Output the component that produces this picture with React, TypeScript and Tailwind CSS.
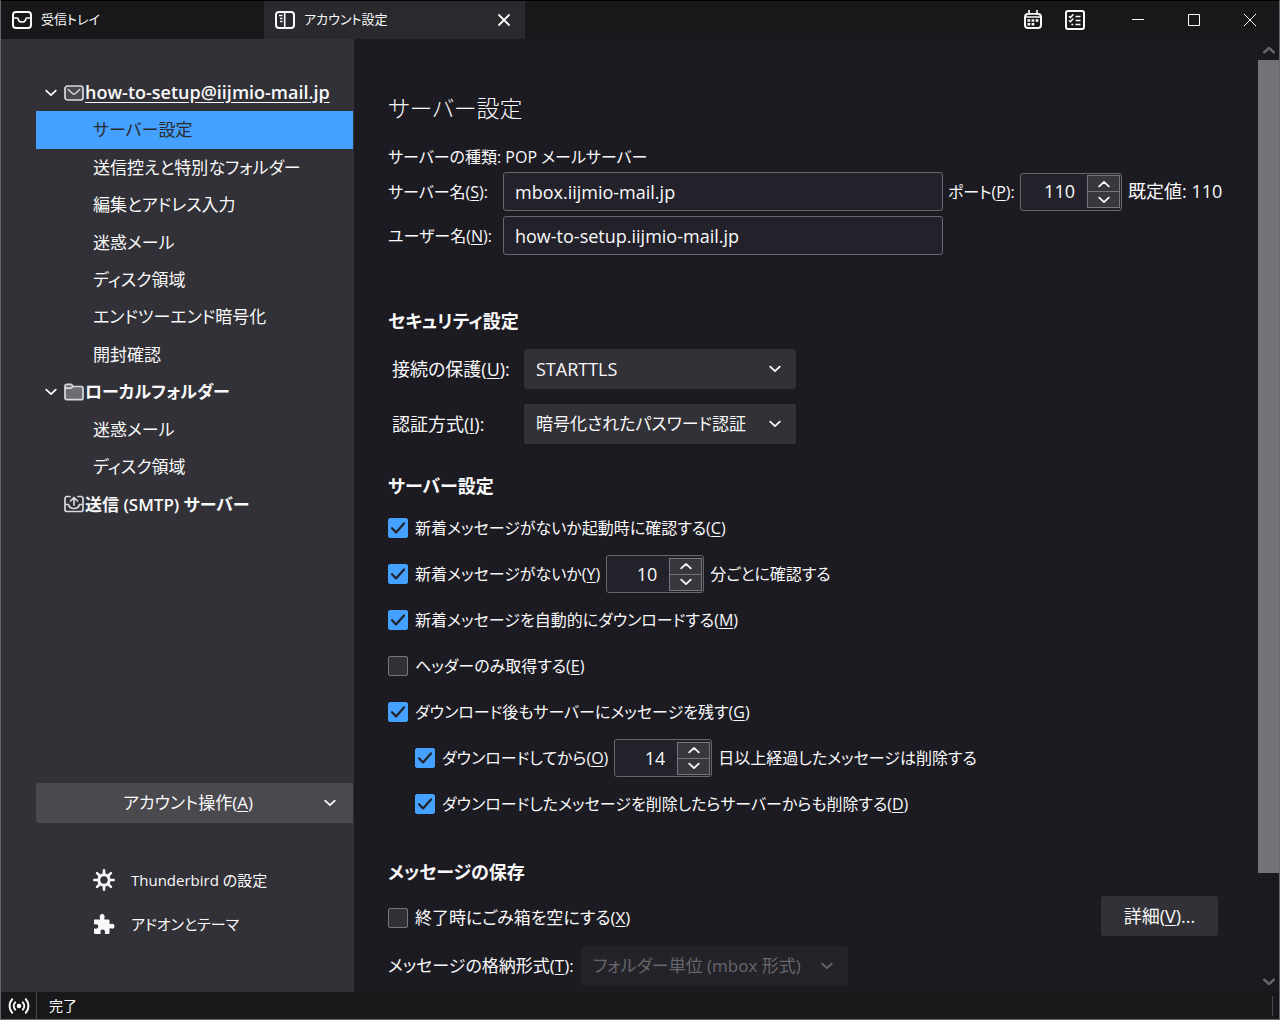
import { useState } from 'react'
import type { ReactNode } from 'react'

interface NavItem {
  label: string
  level: 'root' | 'child'
  icon?: 'mail' | 'folder' | 'smtp'
  expandable?: boolean
  address?: boolean
}

const navItems: NavItem[] = [
  { label: 'how-to-setup@iijmio-mail.jp', level: 'root', icon: 'mail', expandable: true, address: true },
  { label: 'サーバー設定', level: 'child' },
  { label: '送信控えと特別なフォルダー', level: 'child' },
  { label: '編集とアドレス入力', level: 'child' },
  { label: '迷惑メール', level: 'child' },
  { label: 'ディスク領域', level: 'child' },
  { label: 'エンドツーエンド暗号化', level: 'child' },
  { label: '開封確認', level: 'child' },
  { label: 'ローカルフォルダー', level: 'root', icon: 'folder', expandable: true },
  { label: '迷惑メール', level: 'child' },
  { label: 'ディスク領域', level: 'child' },
  { label: '送信 (SMTP) サーバー', level: 'root', icon: 'smtp' },
]

function Chevron({ up = false, className = 'stroke-[1.8]' }: { up?: boolean; className?: string }) {
  return (
    <svg viewBox="0 0 12 12" className={`size-3 shrink-0 fill-none stroke-current ${className}`}>
      <path d={up ? 'M1.2 8.4 6 3.9l4.8 4.5' : 'M1.2 3.6 6 8.1l4.8-4.5'} strokeLinecap="round" strokeLinejoin="round" />
    </svg>
  )
}

function NavIcon({ name }: { name: 'mail' | 'folder' | 'smtp' }) {
  return (
    <svg viewBox="0 0 20 20" className="size-5 shrink-0 fill-none stroke-[#d9d9dc] stroke-[1.7]" strokeLinejoin="round" strokeLinecap="round">
      {name === 'mail' && (
        <>
          <rect x="1" y="3" width="18" height="14" rx="2.5" fill="#4a494e" />
          <path d="m4.2 6.500 4.700 4.200c.6.6 1.600.6 2.200 0l4.700-4.200" strokeWidth="1.500" />
        </>
      )}
      {name === 'folder' && (
        <>
          <path d="M1 16V4c0-1 .7-1.700 1.700-1.700h4.100c.5 0 .9.200 1.200.6l1.200 1.600h8.100c1 0 1.700.7 1.700 1.700V16c0 1-.7 1.700-1.700 1.700H2.700C1.700 17.700 1 17 1 16Z" fill="#6d6d72" />
          <path d="M1.500 6.200h5.700l1.600-1.700" />
        </>
      )}
      {name === 'smtp' && (
        <>
          <path d="M6 2.500H3.200C2 2.500 1 3.400 1 4.600v10.800c0 1.200 1 2.100 2.200 2.100h13.600c1.200 0 2.200-.9 2.200-2.100V4.600c0-1.200-1-2.100-2.200-2.100H14M1.200 10.500h3.300c.6 2.400 2.500 4 5.500 4s4.900-1.600 5.500-4h3.300" />
          <path d="M6.500 7 10 3.500 13.500 7M10 3.800V11" />
        </>
      )}
    </svg>
  )
}

function CheckBox({ id, checked, children }: { id: string; checked: boolean; children: ReactNode }) {
  const [on, setOn] = useState(checked)
  return (
    <div className="flex items-center gap-[7px]">
      <span className="grid size-5 shrink-0">
        <input
          id={id}
          type="checkbox"
          checked={on}
          onChange={() => setOn(!on)}
          className="col-start-1 row-start-1 size-5 appearance-none rounded-[2px] border border-[#77767c] bg-[#323137] checked:border-[#45a1ff] checked:bg-[#45a1ff]"
        />
        {on && (
          <svg viewBox="0 0 20 20" className="pointer-events-none col-start-1 row-start-1 size-5 fill-none stroke-[#23222b] stroke-[2.2]">
            <path d="m4 10.200 4 4.200 8-9" strokeLinecap="round" strokeLinejoin="round" />
          </svg>
        )}
      </span>
      <label htmlFor={id} className="whitespace-nowrap">{children}</label>
    </div>
  )
}

function NumberBox({ id, initial, label, className }: { id: string; initial: number; label?: string; className: string }) {
  const [value, setValue] = useState(initial)
  return (
    <span className={`flex h-[38px] shrink-0 items-center rounded-[3px] border border-[#67666d] bg-[#23222b] pr-px text-[18px] ${className}`}>
      <input
        id={id}
        type="number"
        aria-label={label}
        value={value}
        onChange={(e) => setValue(Number(e.target.value))}
        className="w-0 flex-1 appearance-none bg-transparent pr-3 text-right outline-none [appearance:textfield] [&::-webkit-inner-spin-button]:hidden"
      />
      <span className="flex h-[33px] w-[33px] flex-col divide-y divide-[#77767c] border border-[#77767c] bg-[#38373e]">
        <button type="button" aria-label="増やす" onClick={() => setValue(value + 1)} className="flex flex-1 items-center justify-center">
          <Chevron up />
        </button>
        <button type="button" aria-label="減らす" onClick={() => setValue(value - 1)} className="flex flex-1 items-center justify-center">
          <Chevron />
        </button>
      </span>
    </span>
  )
}

function SelectBox({ id, options, disabled = false, className }: { id: string; options: string[]; disabled?: boolean; className: string }) {
  return (
    <span className={`relative flex h-10 items-center ${disabled ? 'text-[#68676d]' : ''} ${className}`}>
      <select
        id={id}
        disabled={disabled}
        className="h-full w-full appearance-none rounded-[3px] bg-[#323137] px-3 disabled:bg-[#242329] disabled:opacity-100"
      >
        {options.map((option) => (
          <option key={option}>{option}</option>
        ))}
      </select>
      <Chevron className="pointer-events-none absolute right-[15px] stroke-[1.8]" />
    </span>
  )
}

function TitleBar() {
  return (
    <header className="flex h-[39px] shrink-0 border-t border-black bg-[#18181a] text-[13px]">
      <button type="button" className="flex w-[263px] items-center gap-[9px] pl-[11px]">
        <svg viewBox="0 0 20 20" className="size-5 fill-none stroke-current stroke-2" strokeLinejoin="round">
          <rect x="1" y="2" width="18" height="16" rx="3" />
          <path d="M1.500 8h3.700c.5 0 .8.300.9.800.3 1.900 1.800 3.200 3.900 3.200s3.600-1.300 3.900-3.200c.1-.5.4-.8.9-.8h3.700" strokeWidth="1.600" />
        </svg>
        受信トレイ
      </button>
      <div className="flex w-[261px] items-center bg-[#2a2a2e] pr-[13px] pl-[11px]">
        <button type="button" className="flex flex-1 items-center gap-[9px]">
          <svg viewBox="0 0 20 20" className="size-5 fill-none stroke-current stroke-2">
            <rect x="1" y="2" width="18" height="16" rx="3" />
            <path d="M9.700 2v16" strokeWidth="1.600" />
            <path d="M4 5.500h3.500M5 8.500h2.500M5 11.500h2.500" strokeWidth="1.300" />
          </svg>
          アカウント設定
        </button>
        <button type="button" aria-label="タブを閉じる">
          <svg viewBox="0 0 16 16" className="size-4 fill-none stroke-current stroke-[1.8]">
            <path d="m3 3 10 10M13 3 3 13" strokeLinecap="round" />
          </svg>
        </button>
      </div>
      <div className="ml-auto flex items-center">
        <button type="button" aria-label="カレンダー" className="px-[11px]">
          <svg viewBox="0 0 20 20" className="size-5 fill-none stroke-current stroke-2">
            <path d="M5 4C3 4 2 5 2 7v8c0 2 1 3 3 3h10c2 0 3-1 3-3V7c0-2-1-3-3-3" />
            <path d="M6 0v5M14 0v5M6 3.800h8M2.500 7h15" strokeWidth="1.700" />
            <path d="M4.500 10.500h2.700M8.600 10.500h2.700M12.700 10.500h2.700M4.500 14.200h2.700M8.600 14.200h2.700" strokeWidth="2.500" />
          </svg>
        </button>
        <button type="button" aria-label="ToDo" className="px-[11px]">
          <svg viewBox="0 0 20 20" className="size-5 fill-none stroke-current stroke-2">
            <rect x="1" y="1" width="18" height="18" rx="2" />
            <path d="M10.500 6.500h5M10.500 10.500h5M10.500 14.500h5M4 6.200l1.400 1.400 3-3.300M4 10.300l1.400 1.400 3-3.300M6.300 14.500h2" strokeWidth="1.500" />
          </svg>
        </button>
        <button type="button" aria-label="最小化" className="ml-[13px] px-[22px]">
          <svg viewBox="0 0 14 14" className="size-3.5 fill-none stroke-current"><path d="M1 6.500h12" /></svg>
        </button>
        <button type="button" aria-label="最大化" className="px-5">
          <svg viewBox="0 0 14 14" className="size-3.5 fill-none stroke-current"><path d="M1.500 1.500h11v11h-11z" /></svg>
        </button>
        <button type="button" aria-label="閉じる" className="px-[22px]">
          <svg viewBox="0 0 14 14" className="size-3.5 fill-none stroke-current"><path d="m1 1 12 12M13 1 1 13" /></svg>
        </button>
      </div>
    </header>
  )
}

function Sidebar() {
  const [selected, setSelected] = useState(1)

  return (
    <aside className="flex w-[353px] shrink-0 flex-col bg-[#323137] pt-[35px] pr-px pl-[35px] text-[17px]">
      <ul className="grid h-[449px] auto-rows-fr">
        {navItems.map((item, idx) => (
          <li key={idx} className="flex">
            <button
              type="button"
              onClick={() => setSelected(idx)}
              className={`flex w-full items-center whitespace-nowrap ${item.level === 'root' ? 'pl-[9px] font-semibold' : 'pl-[57px]'} ${selected === idx ? 'bg-[#45a1ff] text-[#2a2a2e]' : ''}`}
            >
              {item.level === 'root' && (
                <span className="mr-[7px] flex w-3">{item.expandable && <Chevron />}</span>
              )}
              {item.icon && <NavIcon name={item.icon} />}
              <span className={item.address ? 'ml-px text-[18px] underline underline-offset-3' : item.icon ? 'ml-px' : ''}>{item.label}</span>
            </button>
          </li>
        ))}
      </ul>

      {/* Account actions and app links */}
      <div className="mt-auto pb-[46px]">
        <button type="button" className="flex h-10 w-full items-center rounded-l-[3px] bg-[#4a494e] pr-[17px]">
          <span className="flex-1 pl-4">アカウント操作(<u>A</u>)</span>
          <Chevron />
        </button>
        <nav className="mt-[35px] flex flex-col pl-[57px] text-[15px]">
          <a href="#preferences" className="flex h-11 items-center gap-4">
            <svg viewBox="0 0 22 22" className="size-[22px] fill-none stroke-current">
              <circle cx="11" cy="11" r="5.200" strokeWidth="3" />
              <path d="M11 1.300V5M11 17v3.700M1.300 11H5M17 11h3.700M4.100 4.100l2.700 2.700M15.200 15.200l2.700 2.700M4.100 17.900l2.700-2.700M15.200 6.800l2.700-2.700" strokeWidth="2.600" strokeLinecap="round" />
            </svg>
            Thunderbird の設定
          </a>
          <a href="#addons" className="flex h-11 items-center gap-4">
            <svg viewBox="0 0 22 22" className="size-[22px] fill-current">
              <path d="M1.500 6.500h5c.6 0 .8-.5.600-1C6.200 3.500 7 1 9.200 1s3 2.500 2.100 4.500c-.2.500 0 1 .6 1h3.600c.6 0 1 .4 1 1v3c0 .7.600.9 1.200.6 2-1 3.800 0 3.800 2.100s-1.800 3.100-3.800 2.100c-.6-.3-1.200-.1-1.200.6v4.200c0 .5-.4.900-1 .9h-3c-.6 0-.8-.5-.6-1 .6-1.800-.5-3.400-2.200-3.400S7 18.200 7.600 20c.2.500 0 1-.6 1H1.900c-.5 0-.9-.4-.9-.9V16c0-.6.500-.8 1-.6 1.800.7 3.200-.3 3.200-2s-1.400-2.700-3.200-2c-.5.200-1 0-1-.6V7c0-.3.200-.5.500-.5Z" />
            </svg>
            アドオンとテーマ
          </a>
        </nav>
      </div>
    </aside>
  )
}

function ServerSettings() {
  return (
    <main className="min-w-0 flex-1 overflow-hidden bg-[#1c1b22] pt-[52px] pr-10 pl-[34px]">
      <h1 className="text-[23px] leading-[34px] font-light">サーバー設定</h1>
      <p className="mt-[18px] text-[16px] leading-[29px]">サーバーの種類: POP メールサーバー</p>

      <div className="grid grid-cols-[115px_440px_auto] gap-y-[5px] whitespace-nowrap">
        <label htmlFor="server" className="self-center text-[16px]">サーバー名(<u>S</u>):</label>
        <input id="server" defaultValue="mbox.iijmio-mail.jp" className="h-[39px] rounded-[3px] border border-[#67666d] bg-[#23222b] px-[11px]" />
        <div className="flex items-center pl-[5px]">
          <label htmlFor="port" className="w-[72px] text-[16px]">ポート(<u>P</u>):</label>
          <NumberBox id="port" initial={110} className="w-[102px]" />
          <span className="ml-[6px]">既定値: 110</span>
        </div>
        <label htmlFor="user" className="self-center text-[16px]">ユーザー名(<u>N</u>):</label>
        <input id="user" defaultValue="how-to-setup.iijmio-mail.jp" className="h-[39px] rounded-[3px] border border-[#67666d] bg-[#23222b] px-[11px]" />
      </div>

      <h2 className="mt-[52px] text-[18px] leading-7 font-semibold">セキュリティ設定</h2>
      <div className="mt-[14px] grid grid-cols-[132px_272px] items-center gap-y-[15px] pl-1 whitespace-nowrap">
        <label htmlFor="security">接続の保護(<u>U</u>):</label>
        <SelectBox id="security" options={['STARTTLS', 'SSL/TLS', 'なし']} className="w-full" />
        <label htmlFor="auth">認証方式(<u>I</u>):</label>
        <SelectBox id="auth" options={['暗号化されたパスワード認証', '通常のパスワード認証']} className="w-full text-[17px]" />
      </div>

      <h2 className="mt-7 text-[18px] leading-7 font-semibold">サーバー設定</h2>
      <div className="mt-[5px] grid auto-rows-[46px] items-center text-[16px]">
        <CheckBox id="startup" checked>新着メッセージがないか起動時に確認する(<u>C</u>)</CheckBox>
        <div className="flex items-center gap-[6px]">
          <CheckBox id="interval" checked>新着メッセージがないか(<u>Y</u>)</CheckBox>
          <NumberBox id="minutes" label="確認間隔(分)" initial={10} className="w-[98px]" />
          <span className="whitespace-nowrap">分ごとに確認する</span>
        </div>
        <CheckBox id="auto" checked>新着メッセージを自動的にダウンロードする(<u>M</u>)</CheckBox>
        <CheckBox id="headers" checked={false}>ヘッダーのみ取得する(<u>E</u>)</CheckBox>
        <CheckBox id="leave" checked>ダウンロード後もサーバーにメッセージを残す(<u>G</u>)</CheckBox>
        <div className="flex items-center gap-[6px] pl-[27px]">
          <CheckBox id="expire" checked>ダウンロードしてから(<u>O</u>)</CheckBox>
          <NumberBox id="days" label="保存日数" initial={14} className="w-[98px]" />
          <span className="whitespace-nowrap">日以上経過したメッセージは削除する</span>
        </div>
        <div className="pl-[27px]">
          <CheckBox id="sync-delete" checked>ダウンロードしたメッセージを削除したらサーバーからも削除する(<u>D</u>)</CheckBox>
        </div>
      </div>

      <h2 className="mt-[31px] text-[18px] leading-7 font-semibold">メッセージの保存</h2>
      <div className="mt-[10px] flex h-11 items-start justify-between">
        <div className="flex h-full items-center text-[17px]">
          <CheckBox id="empty-trash" checked={false}>終了時にごみ箱を空にする(<u>X</u>)</CheckBox>
        </div>
        <button type="button" className="h-10 w-[117px] rounded-[3px] bg-[#323137]">詳細(<u>V</u>)...</button>
      </div>
      <div className="mt-[6px] flex items-center text-[17px] whitespace-nowrap">
        <label htmlFor="store" className="w-[193px]">メッセージの格納形式(<u>T</u>):</label>
        <SelectBox id="store" disabled options={['フォルダー単位 (mbox 形式)']} className="w-[267px]" />
      </div>
    </main>
  )
}

function ScrollBar() {
  return (
    <div className="flex w-[21px] shrink-0 flex-col items-center bg-[#1a191f] text-[#67666d]">
      <span className="flex h-[21px] items-center"><Chevron up className="stroke-[2.5]" /></span>
      <span className="w-full flex-[812] bg-[#737278]" />
      <span className="flex-[98]" />
      <span className="flex h-[21px] items-center"><Chevron className="stroke-[2.5]" /></span>
    </div>
  )
}

export default function App() {
  return (
    <div className="flex min-h-screen flex-col border-x border-b border-[#67666d] bg-[#18181a] font-['Open_Sans','Noto_Sans_CJK_JP',sans-serif] text-[18px] text-[#f9f9fa] [font-feature-settings:'palt'] [&_u]:underline-offset-2">
      <TitleBar />
      <div className="flex flex-1">
        <Sidebar />
        <ServerSettings />
        <ScrollBar />
      </div>
      <footer className="flex h-[27px] shrink-0 items-center pr-[6px] text-[14px]">
        <span className="flex h-full w-9 items-center justify-center border-r border-[#4a494e]">
          <svg viewBox="0 0 22 18" className="h-[18px] w-[22px] fill-none stroke-current stroke-2" strokeLinecap="round">
            <circle cx="11" cy="9" r="2.300" fill="currentColor" stroke="none" />
            <path d="M7.200 5.400a5.300 5.300 0 0 0 0 7.200M14.800 5.400a5.300 5.300 0 0 1 0 7.200M4.200 2.300a9.800 9.800 0 0 0 0 13.400M17.800 2.300a9.800 9.800 0 0 1 0 13.400" />
          </svg>
        </span>
        <span className="pl-3">完了</span>
        <span className="ml-auto h-5 border-r border-[#4a494e]" />
      </footer>
    </div>
  )
}
